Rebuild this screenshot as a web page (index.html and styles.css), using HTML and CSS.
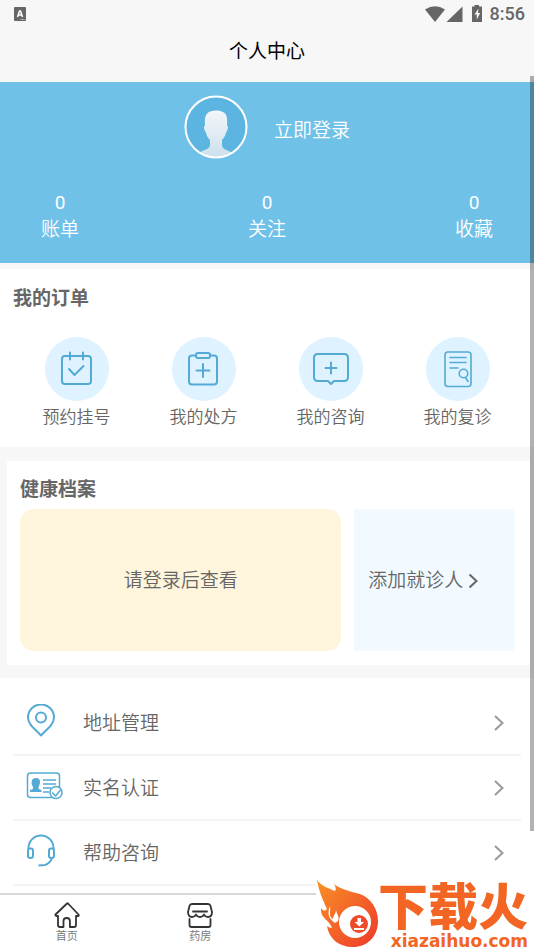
FILE: index.html
```html
<!DOCTYPE html>
<html lang="zh-CN">
<head>
<meta charset="utf-8">
<meta name="viewport" content="width=device-width, initial-scale=1">
<title>个人中心</title>
<link rel="stylesheet" href="styles.css">
</head>
<body>
<div class="status">
  <svg class="status-app" width="12" height="14" viewBox="0 0 12 14"><rect width="12" height="14" rx="1" fill="#666"/><path d="M3.5 10 5.500 4h1L8.500 10M4.500 8h3" fill="none" stroke="#fff" stroke-width="1.500"/><path d="M6.500 12.500h4" stroke="#ccc" stroke-dasharray="1 .5"/></svg>
  <svg width="58" height="18" viewBox="0 0 58 18" fill="#666"><path d="M0 4.500Q10 -2 20 4.500L10 17Z"/><path d="M37.500 1.500V17H21.500Z"/><path d="M47 1.500h2.500V0h4.500v1.500H57V17H47Z"/><path d="m53.500 3.500-4 6h2.300v5l3.400-6.500h-2.200Z" fill="#f7f7f7"/></svg>
  <span class="clock">8:56</span>
</div>
<header class="titlebar"><h1>个人中心</h1></header>
<main class="content">
  <section class="profile">
    <a class="login" href="#login">
      <svg width="64" height="64" viewBox="0 0 64 64">
        <defs>
          <linearGradient id="person" x2="0" y2="1"><stop stop-color="#f3f6f9"/><stop offset="1" stop-color="#cbdfeb"/></linearGradient>
          <clipPath id="disc"><circle cx="32" cy="32" r="30"/></clipPath>
        </defs>
        <circle cx="32" cy="32" r="30.500" fill="#5cb5e1"/>
        <path clip-path="url(#disc)" fill="url(#person)" d="M32 15.500C36 15 38 17 40 17.500c3 2 3.500 6 3 13 1.500 0 1 5-.8 6.500-.7 4-2.500 6-4.200 8v5c0 4 4 4.500 10 7.500V64H15v-6.500c6-3 11-3.500 11-7.500v-5c-2-2-3.500-4-4.200-8-2-1.500-2.300-6.500-.8-6.500C20 20 23 15.500 32 15.500Z"/>
        <circle cx="32" cy="32" r="30.500" fill="none" stroke="#fff" stroke-width="2"/>
      </svg>
      <span>立即登录</span>
    </a>
    <div class="stats">
      <a href="#bills"><span class="count">0</span><span>账单</span></a>
      <a href="#follow"><span class="count">0</span><span>关注</span></a>
      <a href="#saved"><span class="count">0</span><span>收藏</span></a>
    </div>
  </section>

  <section class="orders">
    <h2>我的订单</h2>
    <div class="order-grid">
      <a href="#booking"><span class="bubble"><svg viewBox="0 0 64 64"><rect x="17" y="19" width="29" height="28" rx="3"/><path d="M25 15.500v7M38 15.500v7M24 32l5.500 6 9-9"/></svg></span>预约挂号</a>
      <a href="#prescription"><span class="bubble"><svg viewBox="0 0 64 64"><path d="M24 18.500h-4q-3 0-3 3v23q0 3 3 3h22q3 0 3-3v-23q0-3-3-3h-4"/><rect x="24" y="16" width="14" height="5" rx="2"/><path d="M31 27v13M24.500 33.500h13"/></svg></span>我的处方</a>
      <a href="#consult"><span class="bubble"><svg viewBox="0 0 64 64"><path d="M19 17h26q4 0 4 4v19q0 4-4 4H35l-3 3-3-3H19q-4 0-4-4V21q0-4 4-4ZM32 25.500v11M26.500 31h11"/></svg></span>我的咨询</a>
      <a href="#revisit"><span class="bubble"><svg viewBox="0 0 64 64" class="thin"><rect x="19" y="15" width="26" height="34.500" rx="3"/><path d="M24 20.500h16M24 25.500h16M24 31h8M39.500 40.500l2.500 4"/><circle cx="37.500" cy="36.500" r="4.300"/></svg></span>我的复诊</a>
    </div>
  </section>

  <section class="health">
    <h2>健康档案</h2>
    <div class="health-row">
      <a class="records" href="#login">请登录后查看</a>
      <a class="add" href="#add">添加就诊人<svg width="10" height="16" viewBox="0 0 10 16"><path d="m1.500 1.500 7 6.500-7 6.500"/></svg></a>
    </div>
  </section>

  <nav class="menu" aria-label="服务">
    <a href="#address"><svg class="glyph" viewBox="0 0 38 34"><path d="M15 31.500C9 25 2 20.500 2 13.500a13 13 0 0 1 26 0C28 20.500 21 25 15 31.500Z"/><circle cx="15" cy="13.500" r="5"/></svg><span>地址管理</span><svg class="chevron" viewBox="0 0 10 16"><path d="m1 1 7.500 7L1 15"/></svg></a>
    <a href="#identity"><svg class="glyph card" viewBox="0 0 38 34"><rect x="1.500" y="4" width="32" height="24.500" rx="3"/><path d="M17 11h13M17 15h13M17 19h8M17 23h6"/><path class="solid" d="M10 9c5 0 4.500 5 3 8-1.500 3 0 3 2.500 4v2H4v-2c3-1 4-1 2.500-4C5 14 5 9 10 9Z"/><circle class="seal" cx="30" cy="23.500" r="6"/><path d="m26 23.500 3.500 3.500 5-6"/></svg><span>实名认证</span><svg class="chevron" viewBox="0 0 10 16"><path d="m1 1 7.500 7L1 15"/></svg></a>
    <a href="#help"><svg class="glyph" viewBox="0 0 38 34"><path d="M2.500 15v-1a12.500 12.500 0 0 1 25 0v1"/><rect x="2" y="14.500" width="5" height="9.500" rx="2.200"/><rect x="23" y="14.500" width="5" height="9.500" rx="2.200"/><path d="M26 24c-1 4-5 6.500-7 7l-6.500.5"/></svg><span>帮助咨询</span><svg class="chevron" viewBox="0 0 10 16"><path d="m1 1 7.500 7L1 15"/></svg></a>
  </nav>
</main>
<nav class="tabbar" aria-label="主导航">
  <a href="#home"><svg width="28" height="28" viewBox="0 0 28 28"><path d="M14 2.500 2.500 13.500q-.5 1.500 1 1.500H5v9q0 2 2 2h3.500v-6q0-3 3.200-3t3.200 3v6H21q2 0 2-2v-9h2q1.200 0 .5-1.500L15 2.500q-.5-.5-1 0Z"/></svg>首页</a>
  <a href="#pharmacy"><svg width="28" height="28" viewBox="0 0 28 28"><path d="M6 3h16q2 0 2.500 2l1.500 6q0 5-4 5-3 0-4-2.500-1 2.500-4 2.500t-4-2.500Q9 16 6 16q-4 0-4-5l1.500-6Q4 3 6 3ZM7 10.500h14M3.500 18v6q0 2 2 2h17q2 0 2-2v-6"/></svg>药房</a>
</nav>
<div class="scroll-thumb"></div>
<aside class="brand">
  <svg width="62" height="68" viewBox="0 0 62 68">
    <defs><linearGradient id="fire" x2="1" y2="1"><stop stop-color="#f99126"/><stop offset="1" stop-color="#ee392b"/></linearGradient></defs>
    <path fill="url(#fire)" d="M1 0c4 6 11 8 18 11q2-2-1-7c6 5 15 7 26 10C55 18 62 29 62 41c0 16-11 26-25 26C23 67 13 59 11 46q2 2 5 2C14 40 4 39 5 28q3 5 6 1C7 20 3 12 1 0Z"/>
    <path fill="#fff" d="M14 26c1 7-2 10 3 13 0-4 3-5 3-9 1 5 4 7 2 11l-3 2c-4-3-9-7-5-17Z"/>
    <circle cx="39" cy="42" r="16" fill="#fff"/><circle cx="43" cy="44" r="9" fill="#ed4b2c"/>
    <path fill="#fff" d="M41.500 38h3.500v4h3l-4.700 4.500L38.500 42h3ZM38 48h10v2H38Z"/>
  </svg>
  <div class="brand-text">
    <strong>下载火</strong>
    <span>xiazaihuo.com</span>
  </div>
</aside>
</body>
</html>
```
FILE: styles.css
```css
* { box-sizing: border-box; }

body {
  margin: 0;
  height: 100vh;
  display: flex;
  flex-direction: column;
  position: relative;
  overflow: hidden;
  background: #f7f7f7;
  color: #666;
  font-family: Roboto, "Noto Sans CJK SC", sans-serif;
  font-size: 19px;
  font-weight: 350;
  line-height: 28px;
}

a { color: inherit; text-decoration: none; }
h1, h2 { margin: 0; font-size: 19px; line-height: 28px; }
svg { display: block; flex: none; }

.status {
  display: flex;
  align-items: center;
  flex: none;
  height: 28px;
  padding: 0 9px 0 14px;
}
.status-app { margin-right: auto; }
.clock { margin-left: 7px; font-size: 18px; font-weight: 500; }

.titlebar {
  flex: none;
  height: 54px;
  padding-top: 10px;
  text-align: center;
  color: #000;
}
.titlebar h1 { font-weight: 400; }

.content { flex: 1; min-height: 0; overflow: hidden; }

.profile {
  padding: 12px 0 20px;
  background: #70c1e8;
  color: #fff;
}
.login {
  display: flex;
  align-items: center;
  justify-content: center;
  gap: 26px;
  height: 66px;
}
.login span { padding-top: 8px; }
.stats {
  display: flex;
  justify-content: space-between;
  margin-top: 29px;
  line-height: 27px;
}
.stats a {
  display: flex;
  flex-direction: column;
  width: 120px;
  text-align: center;
}
.count { font-weight: 400; }

.orders {
  margin-top: 6px;
  padding: 16px 13px 14px;
  background: #fff;
}
.order-grid {
  display: grid;
  grid-template-columns: repeat(4, 1fr);
  margin-top: 24px;
}
.order-grid a {
  display: flex;
  flex-direction: column;
  align-items: center;
  font-size: 17px;
  line-height: 32px;
}
.bubble { width: 64px; height: 64px; border-radius: 50%; background: #def3ff; }
.bubble svg {
  fill: none;
  stroke: #53aad4;
  stroke-width: 2;
  stroke-linecap: round;
  stroke-linejoin: round;
}
.bubble .thin { stroke-width: 1.6; }

.health {
  margin: 14px 4px 13px 7px;
  padding: 15px 15px 14px 13px;
  background: #fff;
}
.health-row {
  display: grid;
  grid-template-columns: 2fr 1fr;
  gap: 13px;
  margin-top: 5px;
}
.health-row a {
  display: flex;
  align-items: center;
  min-height: 142px;
  padding-top: 2px;
}
.records { justify-content: center; border-radius: 14px; background: #fff5dd; }
.add { gap: 5px; padding-left: 14px; background: #f2faff; }
.add svg { fill: none; stroke: #666; stroke-width: 2; }

.menu { padding: 13px 13px 20px; background: #fff; }
.menu a {
  display: flex;
  align-items: center;
  height: 65px;
  padding: 2px 17px 0 13px;
  border-bottom: 2px solid #f4f4f4;
}
.glyph {
  width: 38px;
  height: 34px;
  margin-bottom: 6px;
  fill: none;
  stroke: #53aad4;
  stroke-width: 2;
  stroke-linejoin: round;
}
.card { stroke-width: 1.5; }
.glyph .solid { fill: #53aad4; stroke: none; }
.glyph .seal { fill: #fff; }
.menu span { margin-left: 19px; }
.chevron {
  width: 10px;
  height: 16px;
  margin: 0 0 2px auto;
  fill: none;
  stroke: #999;
  stroke-width: 2;
}

.tabbar {
  display: grid;
  grid-template-columns: repeat(4, 1fr);
  flex: none;
  height: 57px;
  padding-top: 6px;
  border-top: 2px solid #d8d8d8;
  background: #fff;
}
.tabbar a {
  display: flex;
  flex-direction: column;
  align-items: center;
  justify-content: flex-end;
  height: 44px;
  color: #777b80;
  font-size: 11px;
  font-weight: 400;
  line-height: 16px;
}
.tabbar svg {
  fill: none;
  stroke: #333;
  stroke-width: 1.8;
  stroke-linejoin: round;
  stroke-linecap: round;
}

.scroll-thumb {
  position: absolute;
  top: 76px;
  right: 0;
  bottom: 119px;
  width: 4px;
  background: rgba(0, 0, 0, .3);
}

.brand {
  position: absolute;
  right: 0;
  bottom: 0;
  display: flex;
  align-items: flex-end;
  padding: 0 6px 0 0;
  background: #fff;
  color: #f26522;
}
.brand svg { margin-bottom: 2px; }
.brand-text {
  display: flex;
  flex-direction: column;
  align-items: flex-end;
}
.brand strong { font-size: 50px; font-weight: 900; line-height: 48px; }
.brand span {
  font-family: "DejaVu Sans", sans-serif;
  font-size: 17px;
  font-weight: 700;
  line-height: 18px;
}
```
